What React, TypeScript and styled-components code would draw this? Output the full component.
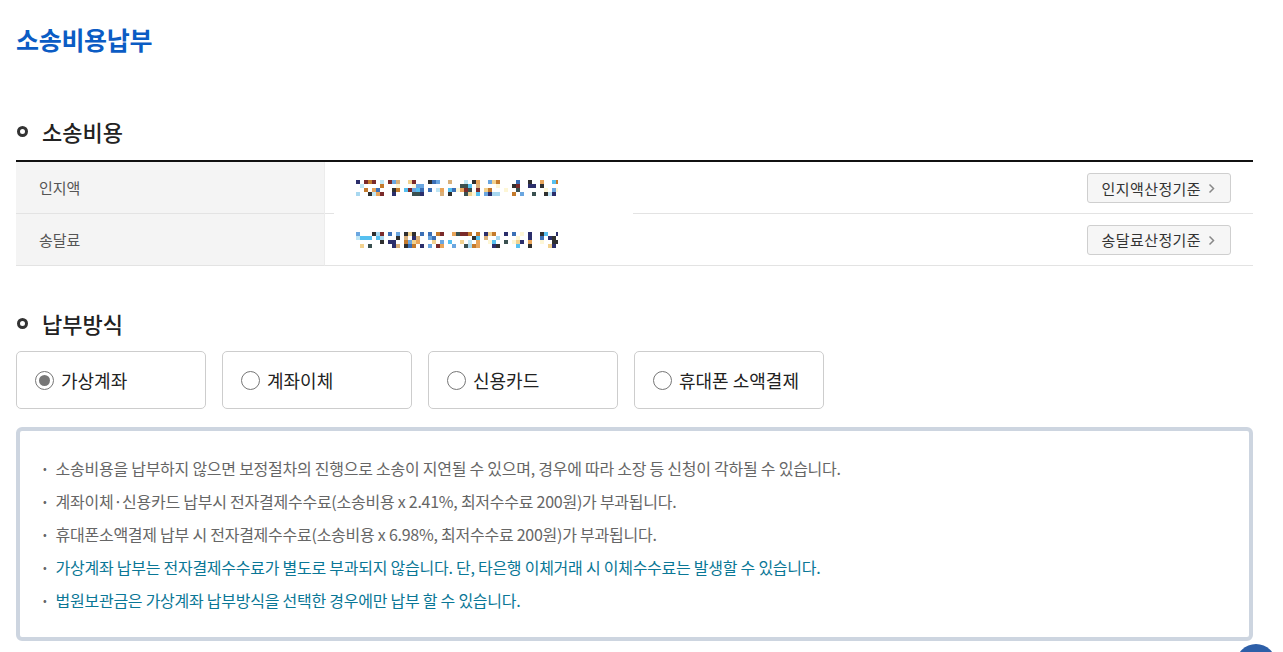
import React from "react";
import styled, { createGlobalStyle } from "styled-components";

const GlobalStyle = createGlobalStyle`
  html, body {
    margin: 0;
    padding: 0;
    background: #fff;
  }
  body {
    font-family: "Noto Sans CJK KR", "Noto Sans", sans-serif;
    color: #333;
    overflow: hidden;
  }
`;

const Page = styled.div`
  width: 1283px;
  height: 652px;
  padding: 0 30px 0 16px;
  box-sizing: border-box;
  position: relative;
  overflow: hidden;
`;

const PageTitle = styled.h1`
  margin: 0;
  padding-top: 22px;
  height: 60px;
  box-sizing: border-box;
  font-size: 25px;
  font-weight: 700;
  line-height: 34px;
  color: #0b5cc4;
  letter-spacing: -0.3px;
`;

const SectionTitle = styled.h2<{ $top: number }>`
  margin: ${(p) => p.$top}px 0 0;
  display: flex;
  align-items: center;
  gap: 14px;
  font-size: 22px;
  font-weight: 500;
  line-height: 30px;
  color: #222;
  height: 30px;

  &::before {
    content: "";
    width: 5px;
    height: 5px;
    border: 3px solid #333;
    border-radius: 50%;
    margin-left: 1px;
  }
`;

const Table = styled.div`
  margin-top: 14px;
  border-top: 2px solid #111;
  display: grid;
  grid-template-columns: 308px 1fr;
`;

const LabelCell = styled.div`
  background: #f4f4f4;
  border-bottom: 1px solid #e3e3e3;
  height: 52px;
  box-sizing: border-box;
  display: flex;
  align-items: center;
  padding-left: 23px;
  font-size: 15px;
  color: #555;
`;

const ValueCell = styled.div<{ $gap?: boolean }>`
  height: 52px;
  box-sizing: border-box;
  display: flex;
  align-items: center;
  justify-content: space-between;
  padding: 0 22px 0 31px;
  border-left: 1px solid #ececec;
  ${(p) =>
    p.$gap
      ? `
    background:
      linear-gradient(#e3e3e3, #e3e3e3) no-repeat left bottom / 9px 1px,
      linear-gradient(#e3e3e3, #e3e3e3) no-repeat right bottom / calc(100% - 308px) 1px;
  `
      : `border-bottom: 1px solid #e3e3e3;`}
`;

const CriteriaButton = styled.button`
  height: 30px;
  padding: 0 15px 0 14px;
  border: 1px solid #cfcfcf;
  border-radius: 3px;
  background: #f6f6f6;
  font-family: inherit;
  font-size: 15px;
  letter-spacing: 0.4px;
  color: #333;
  display: flex;
  align-items: center;
  gap: 7px;
  cursor: pointer;
`;

const Chevron = styled.svg`
  width: 7px;
  height: 11px;
  margin-top: 1px;
`;

const MethodRow = styled.div`
  margin-top: 13px;
  display: flex;
  gap: 16px;
`;

const MethodCard = styled.label`
  min-width: 190px;
  height: 58px;
  box-sizing: border-box;
  padding: 0 19px 0 18px;
  border: 1px solid #cdcdcd;
  border-radius: 5px;
  display: flex;
  align-items: center;
  gap: 7px;
  font-size: 18px;
  color: #222;
  cursor: pointer;
`;

const Radio = styled.span<{ $checked?: boolean }>`
  width: 19px;
  height: 19px;
  box-sizing: border-box;
  border: 1.5px solid #767676;
  border-radius: 50%;
  display: flex;
  align-items: center;
  justify-content: center;

  &::after {
    content: "";
    width: 11px;
    height: 11px;
    border-radius: 50%;
    background: ${(p) => (p.$checked ? "#767676" : "transparent")};
  }
`;

const NoticeBox = styled.ul`
  margin: 18px 0 0;
  width: 1237px;
  box-sizing: border-box;
  list-style: none;
  border: 4px solid #cdd5e0;
  border-radius: 6px;
  padding: 25px 0 25px 23px;
  display: flex;
  flex-direction: column;
  gap: 9px;
`;

const NoticeItem = styled.li<{ $accent?: boolean }>`
  font-size: 16px;
  line-height: 24px;
  letter-spacing: -0.25px;
  color: ${(p) => (p.$accent ? "#0a7796" : "#666")};
  display: flex;
  gap: 9px;

  &::before {
    content: "•";
    color: #666;
    font-size: 11px;
  }
`;

const FloatingButton = styled.div`
  position: absolute;
  left: 1236px;
  top: 644px;
  width: 40px;
  height: 40px;
  border-radius: 50%;
  background: #2d5fa8;
`;

const MosaicSvg = styled.svg`
  display: block;
`;

const palette = [
  "#3b6fb6", "#6aa6e0", "#a8d8f0", "#2f2f2f", "#c47a2c", "#e8a45a",
  "#7a2a2a", "#2b2e6b", "#fdf6d6", "#bfe6f5", "#56c0f0", "#d9b07a",
  "#2f2f2f", "#3a5050", "#2b2e6b", "#f2d28f",
];

// fake redaction mosaic for masked amounts
const Mosaic = ({ seed }: { seed: number }) => {
  let s = seed;
  const rand = () => {
    s = (s * 9301 + 49297) % 233280;
    return s / 233280;
  };
  const groups = [7, 3, 5, 4, 8, 4, 1, 3, 2, 5, 5, 7, 3];
  const rects: React.ReactNode[] = [];
  let col = 0;
  groups.forEach((g, gi) => {
    for (let c = 0; c < g; c++) {
      for (let r = 0; r < 4; r++) {
        if (rand() < 0.4) continue;
        rects.push(
          <rect
            key={`${gi}-${c}-${r}`}
            x={col * 4}
            y={r * 4}
            width={4}
            height={4}
            fill={palette[Math.floor(rand() * palette.length)]}
          />
        );
      }
      col++;
    }
    col += 1;
  });
  return (
    <MosaicSvg width={202} height={16} viewBox="0 0 202 16">
      {rects}
    </MosaicSvg>
  );
};

const ChevronIcon = () => (
  <Chevron viewBox="0 0 7 11">
    <path d="M1.5 1.5 L5.5 5.5 L1.5 9.5" fill="none" stroke="#888" strokeWidth="1.5" />
  </Chevron>
);

const methods = [
  { label: "가상계좌", checked: true },
  { label: "계좌이체" },
  { label: "신용카드" },
  { label: "휴대폰 소액결제" },
];

const notices = [
  { text: "소송비용을 납부하지 않으면 보정절차의 진행으로 소송이 지연될 수 있으며, 경우에 따라 소장 등 신청이 각하될 수 있습니다." },
  { text: "계좌이체·신용카드 납부시 전자결제수수료(소송비용 x 2.41%, 최저수수료 200원)가 부과됩니다." },
  { text: "휴대폰소액결제 납부 시 전자결제수수료(소송비용 x 6.98%, 최저수수료 200원)가 부과됩니다." },
  { text: "가상계좌 납부는 전자결제수수료가 별도로 부과되지 않습니다. 단, 타은행 이체거래 시 이체수수료는 발생할 수 있습니다.", accent: true },
  { text: "법원보관금은 가상계좌 납부방식을 선택한 경우에만 납부 할 수 있습니다.", accent: true },
];

const App = () => {
  return (
    <>
      <GlobalStyle />
      <Page>
        <PageTitle>소송비용납부</PageTitle>

        <SectionTitle $top={56}>소송비용</SectionTitle>
        <Table>
          <LabelCell>인지액</LabelCell>
          <ValueCell $gap>
            <Mosaic seed={17} />
            <CriteriaButton>
              인지액산정기준
              <ChevronIcon />
            </CriteriaButton>
          </ValueCell>
          <LabelCell>송달료</LabelCell>
          <ValueCell>
            <Mosaic seed={83} />
            <CriteriaButton>
              송달료산정기준
              <ChevronIcon />
            </CriteriaButton>
          </ValueCell>
        </Table>

        <SectionTitle $top={42}>납부방식</SectionTitle>
        <MethodRow>
          {methods.map((m) => (
            <MethodCard key={m.label}>
              <Radio $checked={m.checked} />
              {m.label}
            </MethodCard>
          ))}
        </MethodRow>

        <NoticeBox>
          {notices.map((n) => (
            <NoticeItem key={n.text} $accent={n.accent}>
              {n.text}
            </NoticeItem>
          ))}
        </NoticeBox>

        <FloatingButton />
      </Page>
    </>
  );
};

export default App;
